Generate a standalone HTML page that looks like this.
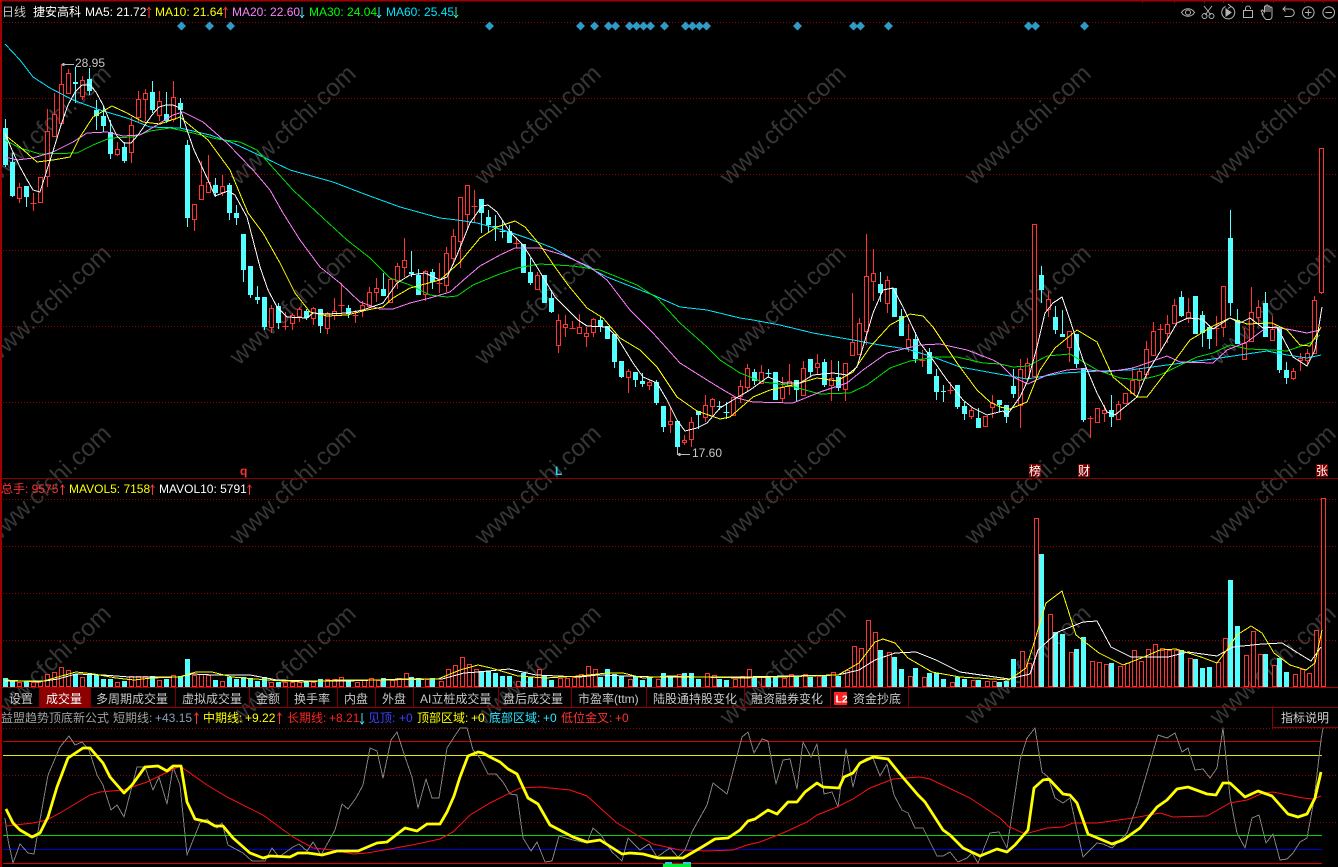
<!DOCTYPE html>
<html><head><meta charset="utf-8"><style>
html,body{margin:0;padding:0;background:#000;width:1338px;height:867px;overflow:hidden}
svg{display:block}
text{font-family:"Liberation Sans","Noto Sans CJK SC",sans-serif;font-size:12px;white-space:pre}
.wm text{font-size:24.5px;fill:#363636}
.ma{fill:none;stroke-width:1;stroke-linejoin:round;shape-rendering:crispEdges}
</style></head><body>
<svg width="1338" height="867" viewBox="0 0 1338 867" xmlns="http://www.w3.org/2000/svg">
<rect width="1338" height="867" fill="#000"/>
<!-- watermarks -->
<g class="wm">
<text transform="translate(-6,186) rotate(-43)">www.cfchi.com</text><text transform="translate(239,186) rotate(-43)">www.cfchi.com</text><text transform="translate(484,186) rotate(-43)">www.cfchi.com</text><text transform="translate(729,186) rotate(-43)">www.cfchi.com</text><text transform="translate(974,186) rotate(-43)">www.cfchi.com</text><text transform="translate(1219,186) rotate(-43)">www.cfchi.com</text>
<text transform="translate(-6,366) rotate(-43)">www.cfchi.com</text><text transform="translate(239,366) rotate(-43)">www.cfchi.com</text><text transform="translate(484,366) rotate(-43)">www.cfchi.com</text><text transform="translate(729,366) rotate(-43)">www.cfchi.com</text><text transform="translate(974,366) rotate(-43)">www.cfchi.com</text><text transform="translate(1219,366) rotate(-43)">www.cfchi.com</text>
<text transform="translate(-6,546) rotate(-43)">www.cfchi.com</text><text transform="translate(239,546) rotate(-43)">www.cfchi.com</text><text transform="translate(484,546) rotate(-43)">www.cfchi.com</text><text transform="translate(729,546) rotate(-43)">www.cfchi.com</text><text transform="translate(974,546) rotate(-43)">www.cfchi.com</text><text transform="translate(1219,546) rotate(-43)">www.cfchi.com</text>
<text transform="translate(-6,726) rotate(-43)">www.cfchi.com</text><text transform="translate(239,726) rotate(-43)">www.cfchi.com</text><text transform="translate(484,726) rotate(-43)">www.cfchi.com</text><text transform="translate(729,726) rotate(-43)">www.cfchi.com</text><text transform="translate(974,726) rotate(-43)">www.cfchi.com</text><text transform="translate(1219,726) rotate(-43)">www.cfchi.com</text>
</g>
<rect x="0" y="728" width="1338" height="139" fill="#000"/>
<!-- frame and grid -->
<path d="M1 0V867M0 .5H1338" stroke="#a00000" stroke-width="2" fill="none" shape-rendering="crispEdges"/>
<path d="M1142.5 0v3M1174.5 0v3M1204.5 0v3M1223.5 0v3M1242.5 0v3M1273.5 0v3M1304.5 0v3M1323.5 0v3M0 478.5H1338M0 707.5H1338" stroke="#8c0000" fill="none" shape-rendering="crispEdges"/>
<path d="M3 22.5H1338M3 98.5H1338M3 174.5H1338M3 250.5H1338M3 326.5H1338M3 402.5H1338M3 499.5H1338M3 546.5H1338M3 593.5H1338M3 640.5H1338M3 728.5H1338M3 775.5H1338M3 822.5H1338" stroke="#9a0000" stroke-dasharray="1 2" fill="none" shape-rendering="crispEdges"/>
<!-- header -->
<text x="2" y="16" fill="#c8c8c8">日线</text><text x="33" y="16" fill="#fff">捷安高科</text>
<text x="85" y="16" fill="#fff">MA5: 21.72</text>
<text x="155" y="16" fill="#ff0">MA10: 21.64</text>
<text x="232" y="16" fill="#ff80ff">MA20: 22.60</text>
<text x="309" y="16" fill="#0f0">MA30: 24.04</text>
<text x="386" y="16" fill="#00e5ff">MA60: 25.45</text>
<!-- arrows -->
<g fill="none" stroke-width="1" shape-rendering="crispEdges">
<path stroke="#f33" d="M149 7.500V18M147 10l2-2.500 2 2.500M225.500 7.500V18M223.500 10l2-2.500 2 2.500M62.500 485V495M60.500 487.500l2-2.500 2 2.500M152.500 485V495M150.500 487.500l2-2.500 2 2.500M249.500 485V495M247.500 487.500l2-2.500 2 2.500M196.500 713V724M194.500 715.500l2-2.500 2 2.500M279.500 713V724M277.500 715.500l2-2.500 2 2.500"/>
<path stroke="#4fd8e8" d="M302 7V17.500M300 15l2 2.500 2-2.500M379 7V17.500M377 15l2 2.500 2-2.500M362 713V724M360 721.500l2 2.500 2-2.500"/>
<path stroke="#3fe8a0" d="M456 7V17.500M454 15l2 2.500 2-2.500"/>
</g>
<!-- icons -->
<g fill="none" stroke="#b4b4b4" stroke-width="1">
<path d="M1181.500 12.500c3-5 10-5 13 0c-3 5-10 5-13 0z"/><circle cx="1188" cy="12.500" r="2.500"/>
<path d="M1204 6l7 9M1212 6l-7 9"/><circle cx="1204.500" cy="16" r="2.500"/><circle cx="1211.500" cy="16" r="2.500"/>
<path d="M1231 6.500a6.500 6.500 0 1 1-5.500 0M1228 4l3 2.500l-3 2"/><path d="M1226 9v7l5-3.500z" fill="#b4b4b4"/>
<path d="M1243.500 10.500h9v7h-9zM1245.500 10.500v-2a2.500 2.500 0 0 1 5 0v.5"/>
<path d="M1263 14l-1.500-2.500c-1-1 .5-2 1.500-1l1.500 1.500v-5c0-1.300 1.500-1.300 1.500 0v-1c0-1.300 2-1.300 2 0v1c0-1.300 2-1.300 2 0v1c0-1.300 2-1 2 0v8c0 2-1 3-2 3.500h-4c-1.500-1-2.500-3-4-5.500zM1266 7v5M1268 6v6M1270 7v5"/>
<path d="M1283 9h7.500a3.500 3.500 0 0 1 0 7.500h-6M1285.500 6.500L1283 9l2.500 2.500"/>
<circle cx="1308.300" cy="12.500" r="5.800"/><path d="M1305 12.500h6.500M1308.300 9.200v6.600"/>
<circle cx="1328.700" cy="12.500" r="5.800"/><path d="M1325.500 12.500h6.500"/>
</g>
<!-- diamonds -->
<g fill="#2e9ac8"><path d="M181.500 21.500l4.500 4.500-4.500 4.500-4.500-4.500zM209.500 21.500l4.500 4.500-4.500 4.500-4.500-4.500zM230.500 21.500l4.500 4.500-4.500 4.500-4.500-4.500zM489.500 21.500l4.500 4.500-4.500 4.500-4.500-4.500zM580.500 21.500l4.500 4.500-4.500 4.500-4.500-4.500zM594.500 21.500l4.500 4.500-4.500 4.500-4.500-4.500zM608.500 21.500l4.500 4.500-4.500 4.500-4.500-4.500zM615.500 21.500l4.500 4.500-4.500 4.500-4.500-4.500zM629.500 21.500l4.500 4.500-4.500 4.500-4.500-4.500zM636.500 21.500l4.500 4.500-4.500 4.500-4.500-4.500zM643.500 21.500l4.500 4.500-4.500 4.500-4.500-4.500zM650.500 21.500l4.500 4.500-4.500 4.500-4.500-4.500zM664.500 21.500l4.500 4.500-4.500 4.500-4.500-4.500zM685.500 21.500l4.500 4.500-4.500 4.500-4.500-4.500zM692.500 21.500l4.500 4.500-4.500 4.500-4.500-4.500zM699.500 21.500l4.500 4.500-4.500 4.500-4.500-4.500zM706.500 21.500l4.500 4.500-4.500 4.500-4.500-4.500zM797.500 21.500l4.500 4.500-4.500 4.500-4.500-4.500zM853.500 21.500l4.500 4.500-4.500 4.500-4.500-4.500zM860.500 21.500l4.500 4.500-4.500 4.500-4.500-4.500zM888.500 21.500l4.500 4.500-4.500 4.500-4.500-4.500zM1028.500 21.500l4.500 4.500-4.500 4.500-4.500-4.500zM1035.500 21.500l4.500 4.500-4.500 4.500-4.500-4.500zM1084.500 21.500l4.500 4.500-4.500 4.500-4.500-4.500z"/></g>
<!-- candle wicks -->
<path fill="none" stroke="#54ffff" shape-rendering="crispEdges" d="M5.500 119V167M12.500 153V197M26.500 186V207M75.500 67V103M89.500 68V95M96.500 100V130M103.500 107V132M110.500 120V159M124.500 142V163M152.500 81V113M166.500 92V123M180.500 98V128M187.500 140V227M215.500 178V197M229.500 183V220M236.500 205V225M243.500 234V282M250.500 266V298M257.500 286V304M264.500 297V330M278.500 303V329M306.500 309V320M320.500 309V333M348.500 305V318M383.500 273V296M411.500 251V277M418.500 269V295M432.500 269V289M481.500 199V233M488.500 210V232M495.500 215V241M502.500 220V238M509.500 225V243M523.500 244V273M530.500 258V285M544.500 275V303M551.500 290V313M600.500 316V332M607.500 326V339M614.500 334V368M621.500 361V378M635.500 372V387M642.500 373V387M656.500 380V405M663.500 406V432M677.500 421V455M698.500 411V429M719.500 401V410M726.500 402V419M754.500 369V385M768.500 369V377M775.500 372V400M796.500 380V402M810.500 359V377M824.500 359V387M838.500 361V391M880.500 272V302M894.500 288V317M901.500 309V336M915.500 332V363M929.500 348V374M936.500 369V400M943.500 385V402M957.500 385V409M964.500 402V420M978.500 408V428M999.500 400V412M1006.500 405V423M1013.500 369V398M1041.500 266V303M1055.500 306V334M1062.500 310V337M1076.500 334V368M1083.500 368V422M1111.500 395V427M1181.500 291V317M1195.500 296V334M1202.500 311V347M1209.500 325V349M1230.500 210V316M1237.500 309V344M1265.500 292V337M1279.500 327V373M1286.500 362V384
M716.500 406.500h6M723.500 412.500h6M765.500 373.500h6M492.500 226.500h6M499.500 231.500h6"/>
<path fill="none" stroke="#f33" shape-rendering="crispEdges" d="M19.500 183V203M33.500 193V211M30.500 203.500h6M40.500 177V202M47.500 109V187M54.500 93V136M61.500 64V123M68.500 69V93M82.500 76V100M117.500 142V156M131.500 117V163M138.500 91V123M145.500 89V121M159.500 91V121M173.500 81V122M194.500 204V231M201.500 161V199M208.500 155V192M222.500 175V196M271.500 305V333M285.500 312V330M282.500 326.500h6M292.500 313V330M299.500 307V322M313.500 307V325M327.500 312V334M334.500 298V320M341.500 283V315M338.500 305.500h6M355.500 310V323M352.500 315.500h6M362.500 301V317M369.500 287V308M376.500 278V302M390.500 278V303M397.500 263V289M404.500 238V277M425.500 270V301M439.500 263V293M436.500 283.500h6M446.500 247V292M453.500 229V265M460.500 197V268M467.500 185V229M474.500 190V222M471.500 206.500h6M516.500 237V248M513.500 243.500h6M537.500 272V289M558.500 314V353M565.500 315V337M572.500 321V329M569.500 328.500h6M579.500 314V333M586.500 327V347M593.500 318V337M628.500 369V393M649.500 380V390M670.500 407V433M684.500 435V445M691.500 417V447M705.500 395V422M712.500 398V416M733.500 397V415M740.500 380V403M747.500 364V391M761.500 365V383M782.500 377V403M789.500 364V395M803.500 361V395M817.500 354V375M831.500 360V401M845.500 363V401M852.500 293V355M859.500 318V354M866.500 234V345M873.500 249V301M887.500 276V313M908.500 324V352M922.500 350V367M919.500 360.500h6M950.500 382V394M947.500 390.500h6M971.500 407V419M985.500 416V426M992.500 395V418M1020.500 359V428M1027.500 358V380M1034.500 224V376M1048.500 291V317M1069.500 331V362M1090.500 416V438M1087.500 418.500h6M1097.500 408V422M1104.500 405V422M1118.500 401V419M1125.500 393V403M1132.500 367V393M1139.500 369V389M1146.500 341V378M1153.500 322V355M1160.500 324V350M1157.500 329.500h6M1167.500 315V343M1174.500 299V323M1188.500 298V323M1216.500 316V346M1213.500 328.500h6M1223.500 286V337M1244.500 328V359M1251.500 287V341M1258.500 300V323M1272.500 316V340M1293.500 368V380M1300.500 353V371M1307.500 349V364M1314.500 296V353M1321.500 148V294"/>
<!-- candle bodies -->
<path fill="none" stroke="#54ffff" stroke-width="5" shape-rendering="crispEdges" d="M5.500 128V165M12.500 162V196M26.500 186V197M75.500 82V84M89.500 79V91M96.500 110V116M103.500 116V126M110.500 132V154M124.500 147V161M152.500 92V110M166.500 114V121M180.500 103V110M187.500 145V218M215.500 185V193M229.500 185V213M236.500 213V218M243.500 234V270M250.500 266V295M257.500 297V300M264.500 297V327M278.500 306V323M306.500 311V318M320.500 309V326M348.500 308V314M383.500 289V296M411.500 272V274M418.500 275V295M432.500 272V282M481.500 199V213M488.500 217V225M509.500 231V243M523.500 244V273M530.500 272V283M544.500 275V303M551.500 298V312M600.500 320V327M607.500 326V339M614.500 334V362M621.500 361V377M635.500 372V380M642.500 381V384M656.500 382V403M663.500 406V427M677.500 421V447M698.500 411V415M754.500 372V381M775.500 372V400M796.500 380V390M810.500 359V372M824.500 362V385M838.500 377V388M880.500 284V293M894.500 288V317M901.500 316V336M915.500 339V359M929.500 352V374M936.500 376V392M943.500 391V392M957.500 385V407M964.500 406V414M978.500 418V428M999.500 400V405M1006.500 405V417M1013.500 386V394M1041.500 275V290M1055.500 317V330M1062.500 334V337M1076.500 334V364M1083.500 368V420M1111.500 410V417M1181.500 297V316M1195.500 296V334M1202.500 315V333M1209.500 327V339M1230.500 238V303M1237.500 320V344M1265.500 303V337M1279.500 327V370M1286.500 370V378"/>
<path fill="#000" stroke="#f33" shape-rendering="crispEdges" d="M17.500 187.500h4v11h-4zM38.500 177.500h4v25h-4zM45.500 131.500h4v45h-4zM52.500 114.500h4v22h-4zM59.500 84.500h4v39h-4zM66.500 73.500h4v20h-4zM80.500 80.500h4v16h-4zM115.500 149.500h4v5h-4zM129.500 125.500h4v27h-4zM136.500 99.500h4v18h-4zM143.500 93.500h4v6h-4zM157.500 101.500h4v14h-4zM171.500 97.500h4v22h-4zM192.500 204.500h4v15h-4zM199.500 185.500h4v14h-4zM206.500 182.500h4v10h-4zM220.500 186.500h4v6h-4zM269.500 308.500h4v19h-4zM290.500 315.500h4v8h-4zM297.500 309.500h4v7h-4zM311.500 308.500h4v10h-4zM325.500 313.500h4v15h-4zM332.500 311.500h4v4h-4zM360.500 305.500h4v5h-4zM367.500 292.500h4v14h-4zM374.500 288.500h4v4h-4zM388.500 279.500h4v23h-4zM395.500 266.500h4v15h-4zM402.500 260.500h4v7h-4zM423.500 271.500h4v23h-4zM444.500 253.500h4v32h-4zM451.500 236.500h4v22h-4zM458.500 197.500h4v44h-4zM465.500 185.500h4v29h-4zM535.500 275.500h4v14h-4zM556.500 320.500h4v25h-4zM563.500 324.500h4v3h-4zM577.500 327.500h4v6h-4zM584.500 333.500h4v3h-4zM591.500 319.500h4v13h-4zM626.500 371.500h4v6h-4zM647.500 382.500h4v3h-4zM668.500 421.500h4v3h-4zM682.500 440.500h4v2h-4zM689.500 422.500h4v17h-4zM703.500 405.500h4v12h-4zM710.500 399.500h4v7h-4zM731.500 397.500h4v18h-4zM738.500 386.500h4v10h-4zM745.500 368.500h4v19h-4zM759.500 372.500h4v11h-4zM780.500 387.500h4v11h-4zM787.500 381.500h4v5h-4zM801.500 368.500h4v27h-4zM815.500 363.500h4v4h-4zM829.500 378.500h4v7h-4zM843.500 363.500h4v26h-4zM850.500 342.500h4v13h-4zM857.500 323.500h4v31h-4zM864.500 276.500h4v55h-4zM871.500 273.500h4v8h-4zM885.500 280.500h4v23h-4zM906.500 339.500h4v8h-4zM969.500 410.500h4v6h-4zM983.500 416.500h4v10h-4zM990.500 403.500h4v4h-4zM1018.500 369.500h4v36h-4zM1025.500 363.500h4v15h-4zM1032.500 224.500h4v152h-4zM1046.500 299.500h4v10h-4zM1067.500 331.500h4v16h-4zM1095.500 408.500h4v14h-4zM1102.500 410.500h4v3h-4zM1116.500 404.500h4v15h-4zM1123.500 393.500h4v10h-4zM1130.500 380.500h4v13h-4zM1137.500 371.500h4v9h-4zM1144.500 349.500h4v25h-4zM1151.500 331.500h4v24h-4zM1165.500 324.500h4v9h-4zM1172.500 305.500h4v18h-4zM1186.500 312.500h4v6h-4zM1221.500 286.500h4v41h-4zM1242.500 343.500h4v16h-4zM1249.500 312.500h4v29h-4zM1256.500 307.500h4v10h-4zM1270.500 329.500h4v11h-4zM1291.500 371.500h4v7h-4zM1298.500 358.500h4v2h-4zM1305.500 353.500h4v7h-4zM1312.500 300.500h4v53h-4zM1319.500 148.500h4v144h-4z"/>
<!-- MA lines -->
<polyline class="ma" stroke="#00e5ff" points="5,44 20,60 33,77 50,88 73,100 100,110 127,118 150,127 180,128 210,135 233,143 263,157 290,170 333,182 367,195 400,207 440,218 457,220 477,223 503,230 527,238 553,248 580,263 607,277 653,295 680,307 707,310 740,318 753,320 780,325 813,333 853,340 880,345 907,349 933,357 960,367 993,373 1027,379 1063,373 1100,371 1130,370 1167,365 1213,359 1240,355 1267,351 1287,355 1307,358 1321,355"/>
<polyline class="ma" stroke="#00e000" points="5,140 20,148 40,154 77,153 93,145 110,138 133,137 150,131 170,128 193,133 217,139 240,142 257,150 275,170 293,190 323,218 347,240 370,258 390,278 410,285 430,295 447,297 457,296 473,285 497,275 517,268 540,264 573,266 600,270 637,285 657,298 680,323 707,347 720,360 740,373 763,382 787,385 820,394 850,393 867,385 890,368 910,361 937,357 957,357 983,363 1000,364 1013,367 1028,366 1047,356 1070,354 1097,370 1120,378 1140,380 1160,375 1197,357 1213,353 1230,345 1248,349 1273,350 1287,351 1310,343 1320,335"/>
<polyline class="ma" stroke="#ff80ff" points="5,157 17,160 33,158 53,152 73,142 87,133 107,132 123,136 140,135 157,125 173,115 183,112 203,122 227,143 253,170 270,190 283,213 300,240 320,267 340,283 360,302 380,309 393,309 410,303 430,298 450,292 467,277 480,266 500,255 515,248 540,248 563,255 590,267 607,280 630,310 653,333 680,363 707,380 720,388 737,398 753,402 793,403 820,392 847,383 863,370 887,353 903,349 920,345 940,344 967,350 993,360 1000,364 1013,377 1028,384 1047,375 1067,370 1080,369 1107,372 1133,368 1150,362 1167,356 1180,362 1213,363 1227,350 1247,342 1267,327 1287,329 1307,333 1320,330"/>
<polyline class="ma" stroke="#ff0" points="5,135 20,147 37,162 53,160 70,157 80,137 93,117 112,106 127,113 143,122 160,124 180,117 193,128 208,140 230,170 248,213 263,233 280,263 295,293 310,312 327,316 347,315 367,310 383,307 393,298 410,288 440,280 460,262 480,238 497,227 515,221 525,227 540,245 555,267 568,285 587,308 603,318 620,338 640,350 657,367 677,397 697,411 720,419 730,417 753,397 770,390 793,385 817,378 837,381 853,372 870,347 890,325 910,314 923,316 933,327 957,363 977,390 990,402 1000,407 1010,409 1027,402 1040,370 1055,348 1077,330 1097,342 1113,377 1137,397 1147,397 1170,367 1190,340 1213,326 1230,318 1247,324 1272,323 1287,330 1300,345 1310,346 1321,327"/>
<polyline class="ma" stroke="#fff" points="5,133 12,150 19,165 26,178 33,190 40,192 47,170 54,148 61,125 68,105 75,92 82,85 90,85 96,92 103,105 110,122 117,136 124,143 131,143 138,135 145,125 152,115 159,107 166,105 173,105 180,108 187,130 194,150 201,165 208,180 215,196 228,191 235,195 247,217 260,267 268,290 277,307 287,317 307,318 313,313 327,314 347,313 363,310 383,303 397,283 410,275 425,273 440,280 447,277 455,260 470,223 482,206 488,205 497,212 510,232 523,245 537,267 555,297 568,310 578,320 587,326 607,327 617,337 633,363 643,377 657,383 667,400 677,420 685,431 697,428 707,423 720,408 733,400 750,390 768,377 783,383 800,383 813,375 833,373 847,375 857,367 863,347 873,313 883,290 893,288 903,307 920,343 933,360 947,380 963,400 973,408 987,415 1003,411 1007,415 1020,397 1028,380 1037,347 1045,313 1053,303 1062,297 1070,320 1083,360 1097,393 1107,412 1115,415 1137,397 1147,373 1163,347 1177,323 1188,318 1202,319 1213,329 1230,318 1240,323 1250,318 1263,328 1277,327 1293,357 1307,366 1315,350 1322,307"/>
<!-- price labels -->
<path d="M62 64.500H74M62.500 63.500h2M62.500 65.500h2M677.500 447V454.500H690M678.500 453.500h2M678.500 455.500h2" stroke="#bbb" fill="none" shape-rendering="crispEdges"/>
<text x="75" y="67" fill="#c8c8c8">28.95</text><text x="692" y="457" fill="#c8c8c8">17.60</text>
<!-- markers -->
<text x="240" y="475" fill="#f33" style="font-weight:bold">q</text>
<text x="555" y="475" fill="#2fd0f0" style="font-weight:bold">L</text>
<rect x="1029" y="464" width="12" height="13" fill="#7a0000"/><rect x="1078" y="464" width="12" height="13" fill="#7a0000"/><rect x="1316" y="464" width="12" height="13" fill="#7a0000"/>
<text x="1029" y="475" fill="#fff">榜</text><text x="1078" y="475" fill="#fff">财</text><text x="1316" y="475" fill="#fff">张</text>
<!-- volume header -->
<text x="1" y="493" fill="#f33">总手: 9575</text>
<text x="69" y="493" fill="#ff0">MAVOL5: 7158</text>
<text x="159" y="493" fill="#fff">MAVOL10: 5791</text>
<!-- volume bars -->
<path fill="none" stroke="#54ffff" stroke-width="5" shape-rendering="crispEdges" d="M5.500 678V687M12.500 680V687M26.500 681V687M75.500 674V687M89.500 675V687M96.500 675V687M103.500 679V687M110.500 679V687M124.500 681V687M152.500 676V687M166.500 679V687M180.500 676V687M187.500 659V687M215.500 680V687M229.500 677V687M236.500 679V687M243.500 677V687M250.500 678V687M257.500 681V687M264.500 677V687M278.500 682V687M306.500 681V687M320.500 679V687M348.500 680V687M383.500 678V687M411.500 677V687M418.500 678V687M432.500 678V687M481.500 671V687M488.500 671V687M495.500 673V687M502.500 676V687M509.500 676V687M523.500 673V687M530.500 677V687M544.500 676V687M551.500 680V687M600.500 677V687M607.500 669V687M614.500 674V687M621.500 676V687M635.500 676V687M642.500 680V687M649.500 678V687M663.500 673V687M670.500 677V687M684.500 673V687M691.500 673V687M698.500 679V687M719.500 679V687M726.500 680V687M754.500 677V687M768.500 678V687M775.500 676V687M796.500 677V687M810.500 677V687M824.500 676V687M838.500 676V687M880.500 650V687M894.500 657V687M901.500 669V687M915.500 668V687M929.500 673V687M936.500 673V687M943.500 679V687M957.500 677V687M964.500 679V687M978.500 680V687M999.500 682V687M1006.500 681V687M1013.500 659V687M1041.500 554V687M1055.500 632V687M1062.500 634V687M1076.500 649V687M1083.500 637V687M1111.500 663V687M1181.500 650V687M1195.500 659V687M1202.500 668V687M1209.500 667V687M1230.500 580V687M1237.500 626V687M1265.500 654V687M1279.500 658V687M1286.500 672V687"/>
<path fill="#000" stroke="#f33" shape-rendering="crispEdges" d="M17.500 682.500h4v4h-4zM31.500 682.500h4v4h-4zM38.500 681.500h4v5h-4zM45.500 674.500h4v12h-4zM52.500 672.500h4v14h-4zM59.500 667.500h4v19h-4zM66.500 670.500h4v16h-4zM80.500 677.500h4v9h-4zM115.500 682.500h4v4h-4zM129.500 676.500h4v10h-4zM136.500 676.500h4v10h-4zM143.500 676.500h4v10h-4zM157.500 680.500h4v6h-4zM171.500 675.500h4v11h-4zM192.500 675.500h4v11h-4zM199.500 674.500h4v12h-4zM206.500 675.500h4v11h-4zM220.500 681.500h4v5h-4zM269.500 682.500h4v4h-4zM283.500 682.500h4v4h-4zM290.500 682.500h4v4h-4zM297.500 682.500h4v4h-4zM311.500 682.500h4v4h-4zM325.500 679.500h4v7h-4zM332.500 679.500h4v7h-4zM339.500 677.500h4v9h-4zM355.500 682.500h4v4h-4zM362.500 680.500h4v6h-4zM369.500 678.500h4v8h-4zM376.500 680.500h4v6h-4zM390.500 680.500h4v6h-4zM397.500 678.500h4v8h-4zM404.500 673.500h4v13h-4zM425.500 679.500h4v7h-4zM439.500 681.500h4v5h-4zM446.500 669.500h4v17h-4zM453.500 665.500h4v21h-4zM460.500 657.500h4v29h-4zM467.500 664.500h4v22h-4zM474.500 669.500h4v17h-4zM516.500 681.500h4v5h-4zM537.500 669.500h4v17h-4zM558.500 678.500h4v8h-4zM565.500 678.500h4v8h-4zM572.500 677.500h4v9h-4zM579.500 674.500h4v12h-4zM586.500 666.500h4v20h-4zM593.500 669.500h4v17h-4zM628.500 679.500h4v7h-4zM656.500 679.500h4v7h-4zM677.500 674.500h4v12h-4zM705.500 673.500h4v13h-4zM712.500 675.500h4v11h-4zM733.500 679.500h4v7h-4zM740.500 676.500h4v10h-4zM747.500 669.500h4v17h-4zM761.500 676.500h4v10h-4zM782.500 678.500h4v8h-4zM789.500 674.500h4v12h-4zM803.500 674.500h4v12h-4zM817.500 676.500h4v10h-4zM831.500 672.500h4v14h-4zM845.500 670.500h4v16h-4zM852.500 646.500h4v40h-4zM859.500 648.500h4v38h-4zM866.500 620.500h4v66h-4zM873.500 632.500h4v54h-4zM887.500 652.500h4v34h-4zM908.500 676.500h4v10h-4zM922.500 677.500h4v9h-4zM950.500 682.500h4v4h-4zM971.500 680.500h4v6h-4zM985.500 681.500h4v5h-4zM992.500 681.500h4v5h-4zM1020.500 651.500h4v35h-4zM1027.500 663.500h4v23h-4zM1034.500 518.500h4v168h-4zM1048.500 614.500h4v72h-4zM1069.500 652.500h4v34h-4zM1090.500 661.500h4v25h-4zM1097.500 662.500h4v24h-4zM1104.500 664.500h4v22h-4zM1118.500 666.500h4v20h-4zM1125.500 663.500h4v23h-4zM1132.500 650.500h4v36h-4zM1139.500 661.500h4v25h-4zM1146.500 649.500h4v37h-4zM1153.500 644.500h4v42h-4zM1160.500 648.500h4v38h-4zM1167.500 650.500h4v36h-4zM1174.500 650.500h4v36h-4zM1188.500 658.500h4v28h-4zM1216.500 662.500h4v24h-4zM1223.500 638.500h4v48h-4zM1244.500 655.500h4v31h-4zM1251.500 631.500h4v55h-4zM1258.500 654.500h4v32h-4zM1272.500 665.500h4v21h-4zM1293.500 674.500h4v12h-4zM1300.500 669.500h4v17h-4zM1307.500 673.500h4v13h-4zM1314.500 630.500h4v56h-4zM1321.500 498.500h4v188h-4z"/>
<polyline class="ma" stroke="#fff" points="5,681 27,681 45,681 58,679 76,674 103,675 129,677 152,677 179,677 192,674 214,675 250,675 277,680 312,681 348,681 402,679 442,679 464,673 478,672 509,669 536,675 580,677 598,675 625,676 656,677 700,677 741,677 838,675 859,670 875,660 895,653 916,652 936,660 960,672 1009,679 1030,674 1038,650 1058,632 1083,622 1097,621 1111,647 1131,657 1168,657 1188,652 1217,656 1233,647 1262,644 1282,643 1298,653 1311,661 1321,647"/>
<polyline class="ma" stroke="#ff0" points="5,680 40,682 58,677 76,672 94,674 116,678 134,680 152,678 179,677 196,672 212,672 232,677 268,680 304,682 339,680 384,680 438,679 460,670 478,665 491,668 518,676 545,678 580,676 607,673 623,673 643,678 670,676 700,677 741,678 781,677 838,675 859,663 875,642 883,639 895,643 908,658 932,672 960,677 1009,680 1026,668 1034,643 1046,603 1062,591 1076,635 1099,653 1123,665 1144,657 1160,650 1176,649 1201,657 1217,663 1229,647 1237,635 1251,626 1262,633 1274,653 1290,665 1306,670 1315,663 1322,630"/>
<!-- tab bar -->
<path d="M0 687.500H1338" stroke="#b00000" shape-rendering="crispEdges"/>
<rect x="39" y="688" width="51" height="19" fill="#8c0000"/>
<path d="M39.500 688v19M90.500 688v19M175.500 688v19M249.500 688v19M287.500 688v19M337.500 688v19M375.500 688v19M413.500 688v19M498.500 688v19M571.500 688v19M646.500 688v19M744.500 688v19M830.500 688v19M908.500 688v19" stroke="#7a0000" shape-rendering="crispEdges"/>
<g fill="#c8c8c8">
<text x="9" y="703">设置</text><text x="46" y="703" fill="#fff">成交量</text><text x="96" y="703">多周期成交量</text><text x="182" y="703">虚拟成交量</text><text x="256" y="703">金额</text><text x="294" y="703">换手率</text><text x="344" y="703">内盘</text><text x="382" y="703">外盘</text><text x="420" y="703">AI立桩成交量</text><text x="503" y="703">盘后成交量</text><text x="578" y="703">市盈率(ttm)</text><text x="653" y="703">陆股通持股变化</text><text x="751" y="703">融资融券变化</text><text x="853" y="703">资金抄底</text>
</g>
<rect x="834" y="692" width="13" height="13" fill="#f22"/><text x="835.500" y="702.500" fill="#fff" style="font-size:10.500px;font-weight:bold">L2</text>
<!-- indicator header -->
<text x="1" y="722" fill="#a0a0a0">益盟趋势顶底新公式</text><text x="113" y="722" fill="#a0a0a0">短期线:</text><text x="155" y="722" fill="#8ca0b4">+43.15</text>
<text x="203" y="722" fill="#ff0">中期线:</text><text x="245" y="722" fill="#ff0">+9.22</text>
<text x="287" y="722" fill="#f22">长期线:</text><text x="329" y="722" fill="#f22">+8.21</text>
<text x="368" y="722" fill="#4040ff">见顶:</text><text x="399" y="722" fill="#4040ff">+0</text>
<text x="417" y="722" fill="#ff0">顶部区域:</text><text x="471" y="722" fill="#ff0">+0</text>
<text x="489" y="722" fill="#2ee6ff">底部区域:</text><text x="543" y="722" fill="#2ee6ff">+0</text>
<text x="561" y="722" fill="#f33">低位金叉:</text><text x="615" y="722" fill="#f33">+0</text>
<path d="M1272.500 708V727.500H1338" stroke="#8c0000" fill="none" shape-rendering="crispEdges"/>
<text x="1281" y="722" fill="#d0d0d0">指标说明</text>
<!-- indicator lines -->
<path fill="none" shape-rendering="crispEdges" stroke="#d80000" d="M3 741.500H1322M3 863.500H1322"/>
<path fill="none" shape-rendering="crispEdges" stroke="#e6e600" d="M3 755.500H1322"/>
<path fill="none" shape-rendering="crispEdges" stroke="#00d800" d="M3 835.500H1322"/>
<path fill="none" shape-rendering="crispEdges" stroke="#0000d0" d="M3 849.500H1322"/>
<polyline class="ma" stroke="#808080" points="5,818 8,840 13,863 20,844 28,853 34,854 43,803 48,775 60,747 69,736 75,745 82,742 89,750 97,775 103,785 111,810 117,805 124,817 137,767 145,767 153,790 159,777 167,804 173,767 180,785 187,855 200,823 207,819 217,828 222,823 228,845 243,853 252,861 265,861 272,848 279,857 293,847 299,844 307,851 313,842 321,855 335,830 342,804 348,809 356,798 363,785 370,748 377,751 383,778 391,740 397,732 405,757 412,777 418,808 426,779 432,798 439,798 447,748 460,728 467,728 473,750 480,758 488,774 496,774 503,782 510,794 517,795 523,838 531,851 537,842 545,862 552,861 559,836 573,840 587,843 593,828 601,835 612,852 622,861 628,838 640,850 649,844 657,857 670,848 678,857 685,850 692,832 707,805 713,783 727,794 742,737 748,732 754,753 762,739 768,741 776,784 783,760 790,759 797,789 803,742 811,757 817,744 824,794 832,792 838,807 846,749 853,787 859,763 867,758 873,758 880,776 887,764 894,795 902,810 908,813 915,828 923,828 937,856 943,856 950,852 958,862 967,858 972,853 978,863 990,833 999,832 1007,848 1020,760 1027,738 1035,728 1042,772 1048,777 1055,798 1063,803 1070,798 1083,857 1097,843 1103,844 1112,848 1127,833 1138,803 1158,735 1167,738 1175,733 1182,752 1188,748 1195,770 1203,769 1210,778 1217,768 1223,728 1230,797 1237,833 1245,848 1252,818 1259,815 1266,843 1273,834 1280,860 1287,859 1293,853 1300,842 1307,838 1314,800 1321,740 1323,728"/>
<polyline fill="none" stroke="#ff1010" stroke-width="1" points="6,826 33,823 47,820 60,813 90,795 100,792 123,790 147,782 180,766 207,785 227,797 263,815 293,837 313,848 333,850 353,854 367,853 390,849 417,844 440,839 453,832 470,815 490,803 520,788 540,787 570,790 587,796 617,823 637,835 653,844 680,850 707,851 733,850 747,845 760,842 783,833 807,822 817,815 837,807 853,799 870,788 893,779 920,777 930,779 970,798 1000,818 1008,826 1025,834 1047,828 1063,827 1073,823 1097,823 1133,818 1160,813 1173,817 1207,816 1230,803 1247,800 1263,793 1273,792 1303,798 1313,799 1321,796"/>
<polyline fill="none" stroke="#ffff00" stroke-width="2.800" stroke-linejoin="round" points="6,809 13,823 20,830 32,837 40,833 48,817 57,787 68,758 83,748 90,748 103,763 110,777 124,793 132,785 145,767 158,766 167,771 173,766 181,766 187,802 195,819 208,822 215,826 223,826 233,838 250,853 263,858 270,856 290,857 298,853 308,853 322,855 337,851 358,851 377,843 387,842 405,828 417,831 427,824 440,824 447,812 454,796 460,777 468,756 478,752 483,753 490,757 500,762 508,769 517,774 528,798 538,804 550,825 573,837 587,842 600,840 622,854 630,853 643,854 658,858 683,858 702,847 715,839 728,838 740,830 748,821 755,819 768,810 777,814 788,802 797,802 805,792 817,783 823,787 839,788 844,777 853,773 860,763 873,757 888,759 900,774 918,795 925,802 943,830 950,835 963,848 980,856 997,849 1007,852 1015,845 1028,830 1034,788 1043,780 1049,779 1063,794 1070,795 1077,803 1088,834 1112,844 1123,840 1140,828 1157,807 1167,800 1177,789 1188,787 1207,794 1216,795 1223,783 1230,783 1245,797 1258,791 1272,796 1288,814 1298,817 1307,814 1315,798 1321,772"/>
<rect x="663" y="864" width="28" height="3" fill="#00f03c"/>
<rect x="665" y="862" width="7" height="2" fill="#2fc8e6"/><rect x="683" y="862" width="8" height="2" fill="#2fc8e6"/>
</svg>
</body></html>
